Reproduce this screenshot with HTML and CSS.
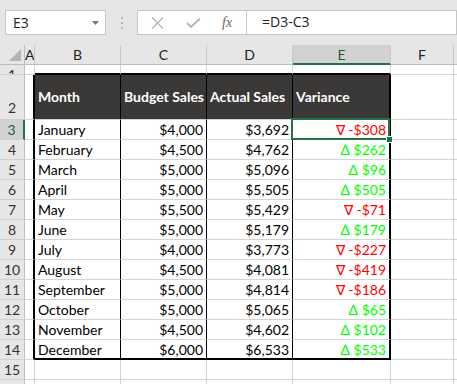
FILE: index.html
```html
<!DOCTYPE html>
<html>
<head>
    <title>Sales Variance</title>
    <link rel="stylesheet" href="styles.css">
</head>
<body>
    <div class="toolbar">
        <div class="namebox">
            <span>E3</span>
            <svg width="7" height="4" viewBox="0 0 7 4"><path d="M0 0h7L3.5 4z" fill="#777"/></svg>
        </div>
        <div class="grip"><i></i><i></i><i></i></div>
        <div class="fbtns">
            <svg class="ico-x" width="13" height="12" viewBox="0 0 13 12"><path d="M1 0.5l11 11M12 0.5l-11 11" stroke="#b4b4b4" stroke-width="1.3" fill="none"/></svg>
            <svg class="ico-ok" width="15" height="10" viewBox="0 0 15 10"><path d="M1 5l4 4 9-8.5" stroke="#b4b4b4" stroke-width="1.8" fill="none"/></svg>
            <span class="fx">fx</span>
        </div>
        <div class="ftext">=D3-C3</div>
    </div>

    <div class="sheet" id="sheet"></div>

    <script>
        var sales = [
            ['January', 4000, 3692],
            ['February', 4500, 4762],
            ['March', 5000, 5096],
            ['April', 5000, 5505],
            ['May', 5500, 5429],
            ['June', 5000, 5179],
            ['July', 4000, 3773],
            ['August', 4500, 4081],
            ['September', 5000, 4814],
            ['October', 5000, 5065],
            ['November', 4500, 4602],
            ['December', 6000, 6533]
        ];
        // G only peeks in at the right edge, so it gets no label
        var cols = ['A', 'B', 'C', 'D', 'E', 'F', ''];
        var sheet = document.getElementById('sheet');

        function money(n) {
            return '$' + n.toLocaleString('en-US');
        }

        function cell(cls, text) {
            var d = document.createElement('div');
            d.className = cls;
            if (text !== undefined) d.textContent = text;
            sheet.appendChild(d);
            return d;
        }

        // column headers
        cell('corner');
        cols.forEach(function (c) {
            cell('colhead' + (c === 'E' ? ' sel' : ''), c);
        });

        for (var r = 1; r <= 16; r++) {
            cell('rowhead' + (r === 3 ? ' sel' : '') + (r === 2 ? ' tall' : ''), r < 16 ? r : '');
            var inTable = r >= 2 && r <= 14;
            var row = sales[r - 3];

            cols.forEach(function (c, i) {
                var cls = 'cell';
                var text = '';
                if (c === 'A' && inTable) cls += ' t-left';
                if (r === 1 && i >= 1 && i <= 4) cls += ' t-top';
                if (inTable && i >= 1 && i <= 3) cls += ' t-in';
                if (inTable && c === 'E') cls += ' t-right';
                if (r === 14 && i >= 1 && i <= 4) cls += ' t-bottom';

                if (r === 2 && i >= 1 && i <= 4) {
                    cls += ' head';
                    text = ['', 'Month', 'Budget Sales', 'Actual Sales', 'Variance'][i];
                }
                if (row) {
                    if (c === 'B') text = row[0];
                    if (c === 'C') { cls += ' num'; text = money(row[1]); }
                    if (c === 'D') { cls += ' num'; text = money(row[2]); }
                    if (c === 'E') {
                        var v = row[2] - row[1];
                        cls += ' num ' + (v < 0 ? 'down' : 'up');
                        text = v < 0 ? '\u2207 -' + money(-v) : '\u0394 ' + money(v);
                    }
                }
                if (r === 3 && c === 'E') cls += ' active';
                cell(cls, text);
            });
        }
    </script>
</body>
</html>
```

FILE: styles.css
```css
body {
    margin: 0;
    background: #fff;
    overflow: hidden;
    font-family: Lato, "Open Sans", sans-serif;
}

.toolbar {
    height: 45px;
    box-sizing: border-box;
    background: #e6e6e6;
    display: flex;
    align-items: flex-start;
    padding: 10px 0 0 5px;
    font-family: "Open Sans", sans-serif;
    font-size: 14px;
    color: #222;
}
.namebox {
    width: 101px;
    height: 25px;
    box-sizing: border-box;
    border: 1px solid #c6c6c6;
    background: #fff;
    display: flex;
    align-items: center;
    justify-content: space-between;
    padding: 0 6px 0 7px;
}
.grip {
    width: 31px;
    height: 25px;
    display: flex;
    flex-direction: column;
    align-items: center;
    justify-content: center;
    gap: 3px;
}
.grip i {
    width: 2px;
    height: 2px;
    background: #b4b4b4;
}
.fbtns {
    width: 110px;
    height: 25px;
    box-sizing: border-box;
    border: 1px solid #c6c6c6;
    background: #fff;
    display: flex;
    align-items: center;
    padding-left: 13px;
}
.ico-ok {
    margin-left: 22px;
}
.fx {
    margin-left: 21px;
    font-family: "Liberation Serif", serif;
    font-style: italic;
    font-size: 14px;
    color: #666;
}
.ftext {
    flex: 1;
    height: 25px;
    box-sizing: border-box;
    border: 1px solid #c6c6c6;
    border-left: none;
    background: #fff;
    padding-left: 15px;
    line-height: 22px;
}

.sheet {
    display: grid;
    grid-template-columns: 25px 10px 86px 86px 86px 98px 63px 40px;
    grid-template-rows: 20px 10px 45px repeat(14, 20px);
    font-size: 14px;
    color: #000;
}
.sheet > div {
    box-sizing: border-box;
    white-space: nowrap;
    overflow: hidden;
}

.corner {
    background: #e6e6e6;
    border-right: 1px solid #bdbdbd;
    border-bottom: 1px solid #bdbdbd;
    position: relative;
}
.corner::after {
    content: "";
    position: absolute;
    right: 3px;
    bottom: 3px;
    border-style: solid;
    border-width: 0 0 12px 12px;
    border-color: transparent transparent #b4b4b4 transparent;
}
.colhead {
    background: #e6e6e6;
    border-right: 1px solid #c8c8c8;
    border-bottom: 1px solid #bdbdbd;
    text-align: center;
    line-height: 19px;
    color: #222;
}
.colhead.sel {
    background: #d2d2d2;
    border-bottom: 2px solid #217346;
    color: #1e5a38;
}
.rowhead {
    background: #e6e6e6;
    border-right: 1px solid #bdbdbd;
    border-bottom: 1px solid #d0d0d0;
    text-align: center;
    line-height: 19px;
    color: #333;
}
.rowhead.tall {
    display: flex;
    align-items: flex-end;
    justify-content: center;
    padding-bottom: 2px;
}
.rowhead.sel {
    background: #d2d2d2;
    border-right: 2px solid #217346;
    color: #1e5a38;
}

.cell {
    border-right: 1px solid #d4d4d4;
    border-bottom: 1px solid #d4d4d4;
    padding: 0 3px;
    line-height: 20px;
}
.cell.num {
    text-align: right;
}
.cell.t-left {
    border-right: 2px solid #000;
}
.cell.t-top {
    border-bottom: 2px solid #000;
}
.cell.t-in {
    border-right: 1px solid #000;
}
.cell.t-right {
    border-right: 2px solid #000;
}
.cell.t-bottom {
    border-bottom: 2px solid #000;
}
.cell.head {
    background: #3b3838;
    color: #fff;
    font-weight: bold;
    display: flex;
    align-items: center;
}
.cell.up {
    color: #00ff00;
}
.cell.down {
    color: #ff0000;
}
.sheet > .cell.active {
    position: relative;
    overflow: visible;
}
.cell.active::after {
    content: "";
    position: absolute;
    left: -2px;
    top: -2px;
    right: -1px;
    bottom: -1px;
    border: 2px solid #217346;
}
.cell.active::before {
    content: "";
    position: absolute;
    right: -4px;
    bottom: -4px;
    width: 5px;
    height: 5px;
    background: #217346;
    border: 1px solid #fff;
    z-index: 1;
}
```
